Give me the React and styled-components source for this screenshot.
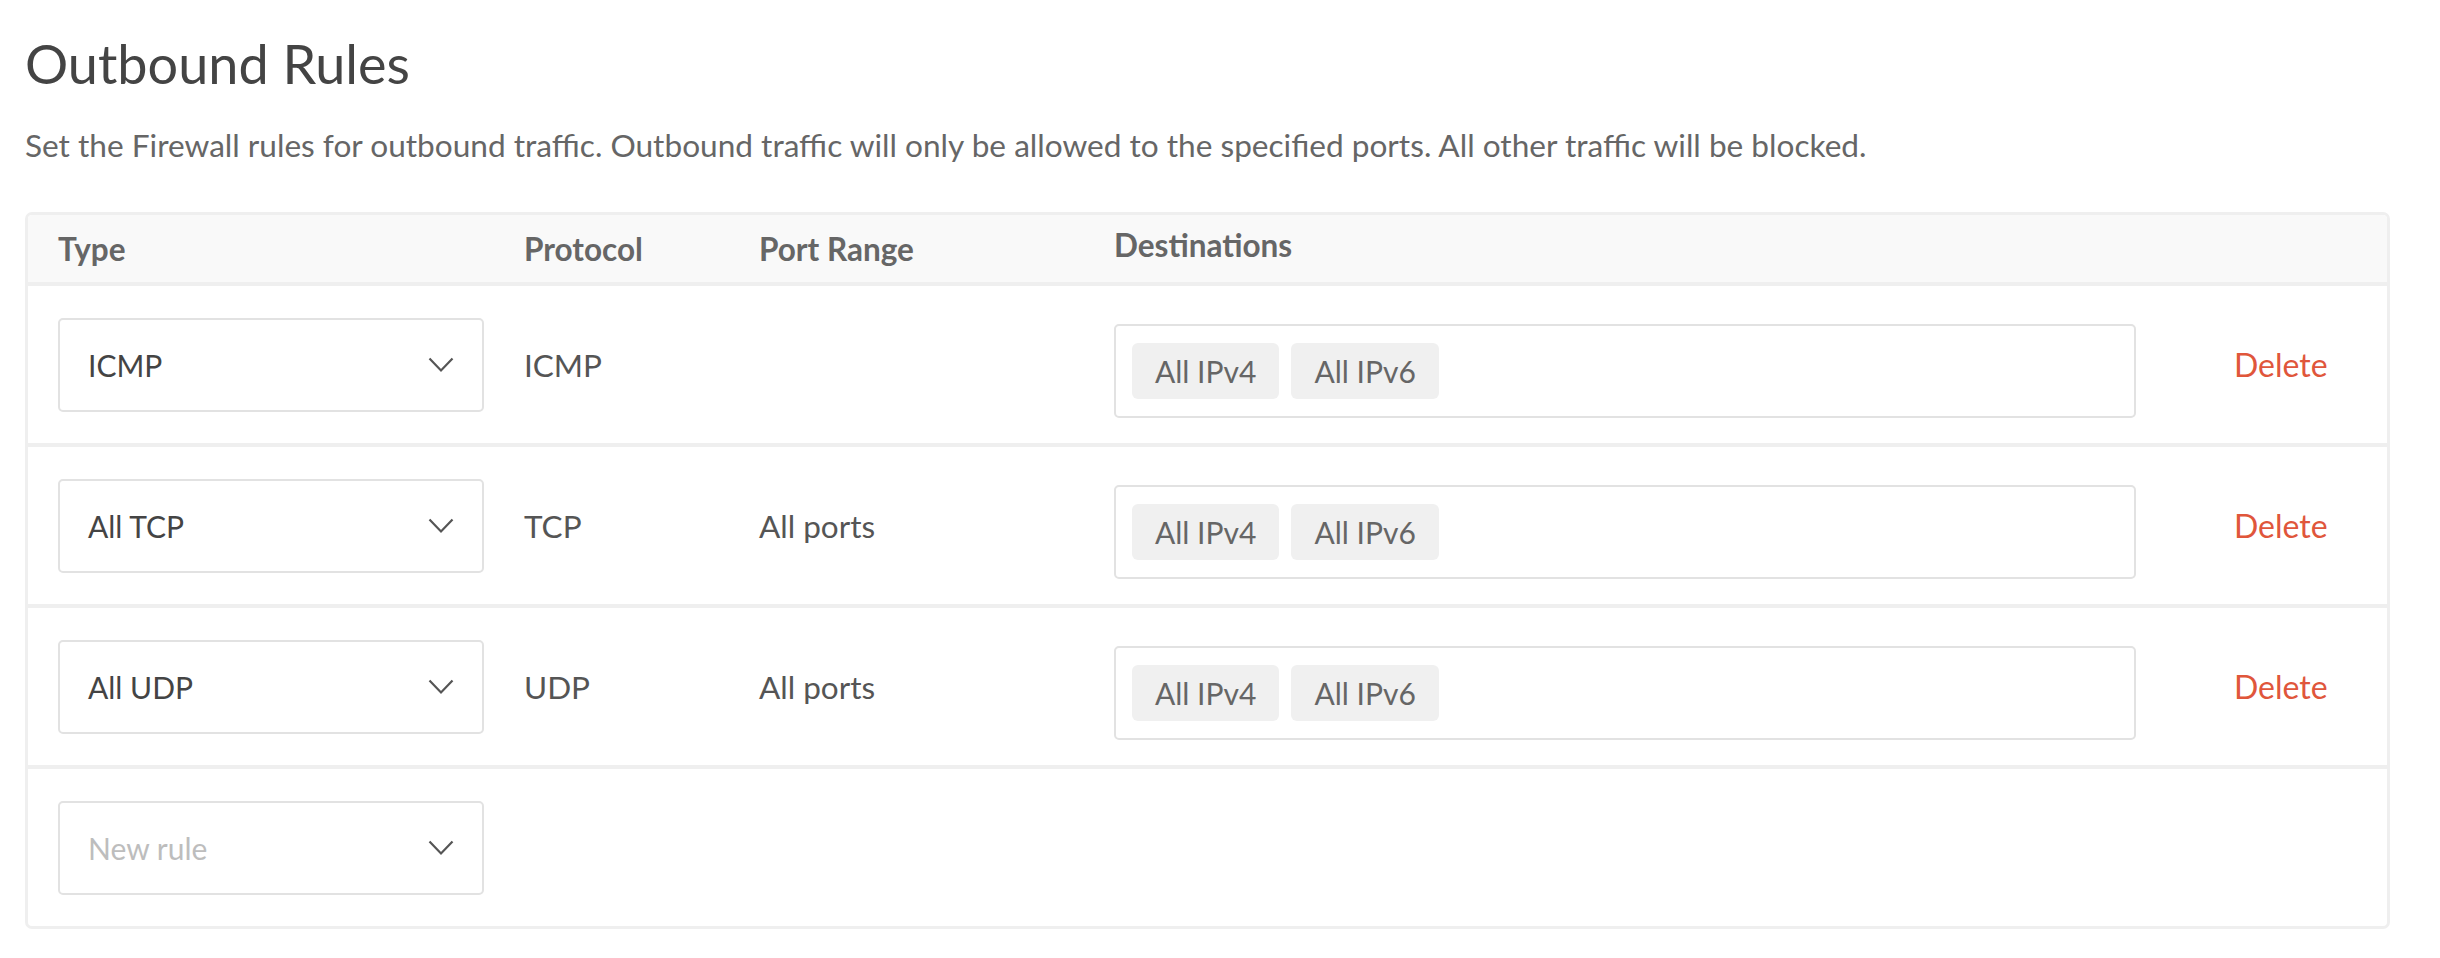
import React from "react";
import styled, { createGlobalStyle } from "styled-components";

const GlobalStyle = createGlobalStyle`
  body {
    margin: 0;
    background: #fff;
    font-family: Lato, "Liberation Sans", sans-serif;
    color: #555;
  }
`;

const Page = styled.main`
  padding: 22px 50px 30px 25px;
`;

const Title = styled.h1`
  margin: 0;
  font-size: 54px;
  font-weight: 400;
  line-height: 84px;
  color: #444;
`;

const Intro = styled.p`
  margin: 19px 0 47px;
  font-size: 31.6px;
  line-height: 40px;
  color: #666;
`;

const Card = styled.section`
  border: 3px solid #efefef;
  border-radius: 7px;
  overflow: hidden;
`;

const Grid = styled.div`
  display: grid;
  grid-template-columns: 466px 235px 355px 1022px 1fr;
  align-items: center;
  padding-left: 30px;
`;

const Head = styled(Grid)`
  height: 67px;
  background: #f9f9f9;
  border-bottom: 4px solid #efefef;
`;

const HeadLabel = styled.div`
  font-size: 31.5px;
  font-weight: 700;
  color: #666;
  margin-top: ${(p) => (p.$raised ? "-8px" : "0")};
`;

const Row = styled(Grid)`
  height: 157px;
  border-bottom: ${(p) => (p.$last ? "none" : "4px solid #efefef")};
`;

const Select = styled.div`
  box-sizing: border-box;
  width: 426px;
  height: 94px;
  border: 2px solid #e2e2e2;
  border-radius: 5px;
  display: flex;
  align-items: center;
  justify-content: space-between;
  padding: 0 28px 0 28px;
  font-size: 30px;
  color: ${(p) => (p.$placeholder ? "#bdbdbd" : "#444")};
`;

const Cell = styled.div`
  font-size: 31.5px;
  color: #555;
`;

const Destinations = styled.div`
  box-sizing: border-box;
  height: 94px;
  margin-top: 12px;
  border: 2px solid #e2e2e2;
  border-radius: 5px;
  display: flex;
  align-items: center;
  gap: 12px;
  padding: 0 16px;
`;

const Chip = styled.span`
  display: inline-flex;
  align-items: center;
  height: 56px;
  padding: 0 23px;
  border-radius: 6px;
  background: #f0f0f0;
  font-size: 30px;
  color: #666;
`;

const DeleteLink = styled.a`
  margin-left: 98px;
  font-size: 32px;
  color: #e0563b;
  cursor: pointer;
`;

function Chevron() {
  return (
    <svg width="26" height="16" viewBox="0 0 26 16" fill="none">
      <polyline
        points="1.5,1.5 13,13.5 24.5,1.5"
        stroke="#555"
        strokeWidth="2.2"
        strokeLinejoin="miter"
      />
    </svg>
  );
}

const rules = [
  { type: "ICMP", protocol: "ICMP", ports: "" },
  { type: "All TCP", protocol: "TCP", ports: "All ports" },
  { type: "All UDP", protocol: "UDP", ports: "All ports" },
];

export default function App() {
  return (
    <Page>
      <GlobalStyle />
      <Title>Outbound Rules</Title>
      <Intro>
        Set the Firewall rules for outbound traffic. Outbound traffic will only
        be allowed to the specified ports. All other traffic will be blocked.
      </Intro>
      <Card>
        <Head>
          <HeadLabel>Type</HeadLabel>
          <HeadLabel>Protocol</HeadLabel>
          <HeadLabel>Port Range</HeadLabel>
          <HeadLabel $raised>Destinations</HeadLabel>
          <div />
        </Head>
        {rules.map((r) => (
          <Row key={r.type}>
            <Select>
              {r.type}
              <Chevron />
            </Select>
            <Cell>{r.protocol}</Cell>
            <Cell>{r.ports}</Cell>
            <Destinations>
              <Chip>All IPv4</Chip>
              <Chip>All IPv6</Chip>
            </Destinations>
            <DeleteLink>Delete</DeleteLink>
          </Row>
        ))}
        <Row $last>
          <Select $placeholder>
            New rule
            <Chevron />
          </Select>
        </Row>
      </Card>
    </Page>
  );
}
